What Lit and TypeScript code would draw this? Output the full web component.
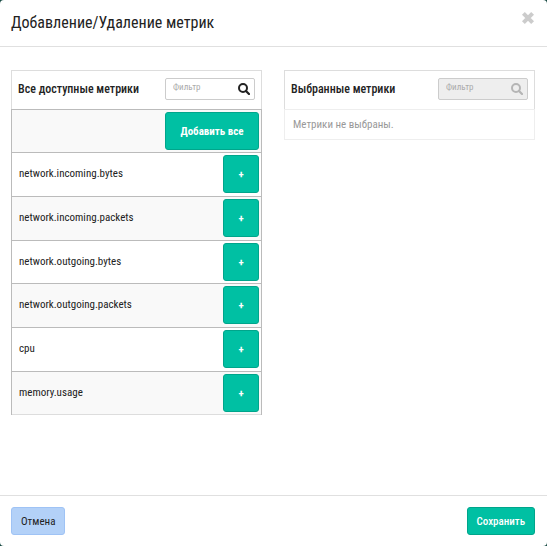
import { LitElement, html, css, svg } from "lit";
import { customElement, state } from "lit/decorators.js";

const searchIcon = html`<svg class="search" viewBox="0 0 12 12" aria-hidden="true">
  ${svg`<circle cx="5" cy="5" r="4" fill="none" stroke="currentColor" stroke-width="2"/>
  <path d="M8 8L11 11" stroke="currentColor" stroke-width="2.2" stroke-linecap="round"/>`}
</svg>`;

@customElement("app-root")
export class AppRoot extends LitElement {
  @state() private metrics = [
    "network.incoming.bytes",
    "network.incoming.packets",
    "network.outgoing.bytes",
    "network.outgoing.packets",
    "cpu",
    "memory.usage",
  ];

  static styles = css`
    :host {
      display: block;
      background: #174a42;
      font-family: "Roboto Condensed", "Liberation Sans Narrow", Roboto, sans-serif;
      font-size: 11px;
      line-height: 15px;
      color: #222;
    }
    * {
      box-sizing: border-box;
    }
    button,
    input {
      font: inherit;
    }
    .dialog {
      display: flex;
      flex-direction: column;
      min-height: 100vh;
      background: #fff;
      border-radius: 4px;
    }
    .head {
      display: flex;
      justify-content: space-between;
      align-items: flex-start;
      padding: 11px 12px 11px 11px;
      border-bottom: 1px solid #e0e0e0;
    }
    h1 {
      margin: 0;
      font-size: 16px;
      line-height: 24px;
      font-weight: 400;
    }
    .close {
      display: flex;
      padding: 0;
      border: 0;
      background: none;
      color: #ccc;
    }
    .close svg {
      width: 14px;
      height: 14px;
    }
    .body {
      flex: 1;
      display: grid;
      grid-template-columns: 1fr 1fr;
      gap: 22px;
      align-items: start;
      padding: 23px 12px 23px 11px;
    }
    .panel-head {
      display: flex;
      justify-content: space-between;
      align-items: center;
      height: 39px;
      padding: 0 6px 3px;
      border: 1px solid #ddd;
      border-bottom: 0;
    }
    h2 {
      margin: 0;
      font-size: 12px;
      line-height: 16px;
      font-weight: 500;
    }
    .filter {
      display: flex;
      align-items: center;
      width: 90px;
      height: 22px;
      padding: 0 4px 0 7px;
      border: 1px solid #ccc;
      border-radius: 2px;
      background: #fff;
    }
    .filter input {
      flex: 1;
      min-width: 0;
      height: 16px;
      padding: 0 0 3px;
      border: 0;
      outline: 0;
      background: none;
      font-size: 9px;
      color: #222;
    }
    .filter input::placeholder {
      color: #aaa;
      opacity: 1;
    }
    .filter.disabled {
      background: #eee;
      color: #b5b5b5;
    }
    .search {
      width: 12px;
      height: 12px;
    }
    table {
      width: 100%;
      border-collapse: separate;
      border-spacing: 0;
      border: 1px solid #bbb;
      border-width: 0 1px;
    }
    td {
      height: 44px;
      padding: 0 2px 2px 7px;
      border-top: 1px solid #bbb;
    }
    td.action {
      padding: 2px 2px 0 0;
      vertical-align: top;
    }
    tr:nth-child(3n + 1) td {
      height: 43px;
    }
    tr:nth-child(odd) td {
      background: #f9f9f9;
    }
    tr:nth-child(even) td {
      background: #fff;
    }
    tr:last-child td {
      height: 44px;
      border-bottom: 1px solid #ddd;
    }
    .btn {
      border: 1px solid #00a58b;
      border-radius: 3px;
      background: #00c0a3;
      color: #fff;
      font-weight: 700;
      padding: 0 9px;
      height: 28px;
    }
    .add {
      display: block;
      margin-left: auto;
      width: 36px;
      height: 38px;
      padding: 0;
    }
    .all {
      width: 94px;
    }
    .empty {
      margin: 0;
      padding: 7px 8px;
      border: 1px solid #eee;
      color: #999;
    }
    .foot {
      display: flex;
      justify-content: space-between;
      padding: 11px 12px 11px 11px;
      border-top: 1px solid #e0e0e0;
    }
    .save {
      font-weight: 500;
    }
    .cancel {
      border-color: #9fc3f5;
      background: #b3d1f8;
      color: #222;
      font-weight: 400;
    }
  `;

  render() {
    return html`
      <div class="dialog" role="dialog" aria-labelledby="title">
        <header class="head">
          <h1 id="title">Добавление/Удаление метрик</h1>
          <button class="close" aria-label="Закрыть">
            <svg viewBox="0 0 14 14"><path d="M2.4 2.4L11.6 11.6M11.6 2.4L2.4 11.6" stroke="currentColor" stroke-width="4"/></svg>
          </button>
        </header>
        <main class="body">
          <section>
            <div class="panel-head">
              <h2>Все доступные метрики</h2>
              <label class="filter"><input type="text" placeholder="Фильтр" aria-label="Фильтр" />${searchIcon}</label>
            </div>
            <table>
              <tbody>
                <tr>
                  <td class="action" colspan="2"><button class="btn add all">Добавить все</button></td>
                </tr>
                ${this.metrics.map(
                  (name) => html`<tr>
                    <td>${name}</td>
                    <td class="action"><button class="btn add" aria-label="Добавить ${name}">+</button></td>
                  </tr>`
                )}
              </tbody>
            </table>
          </section>
          <section>
            <div class="panel-head">
              <h2>Выбранные метрики</h2>
              <label class="filter disabled"><input type="text" placeholder="Фильтр" aria-label="Фильтр" disabled />${searchIcon}</label>
            </div>
            <p class="empty">Метрики не выбраны.</p>
          </section>
        </main>
        <footer class="foot">
          <button class="btn cancel">Отмена</button>
          <button class="btn save">Сохранить</button>
        </footer>
      </div>
    `;
  }
}
